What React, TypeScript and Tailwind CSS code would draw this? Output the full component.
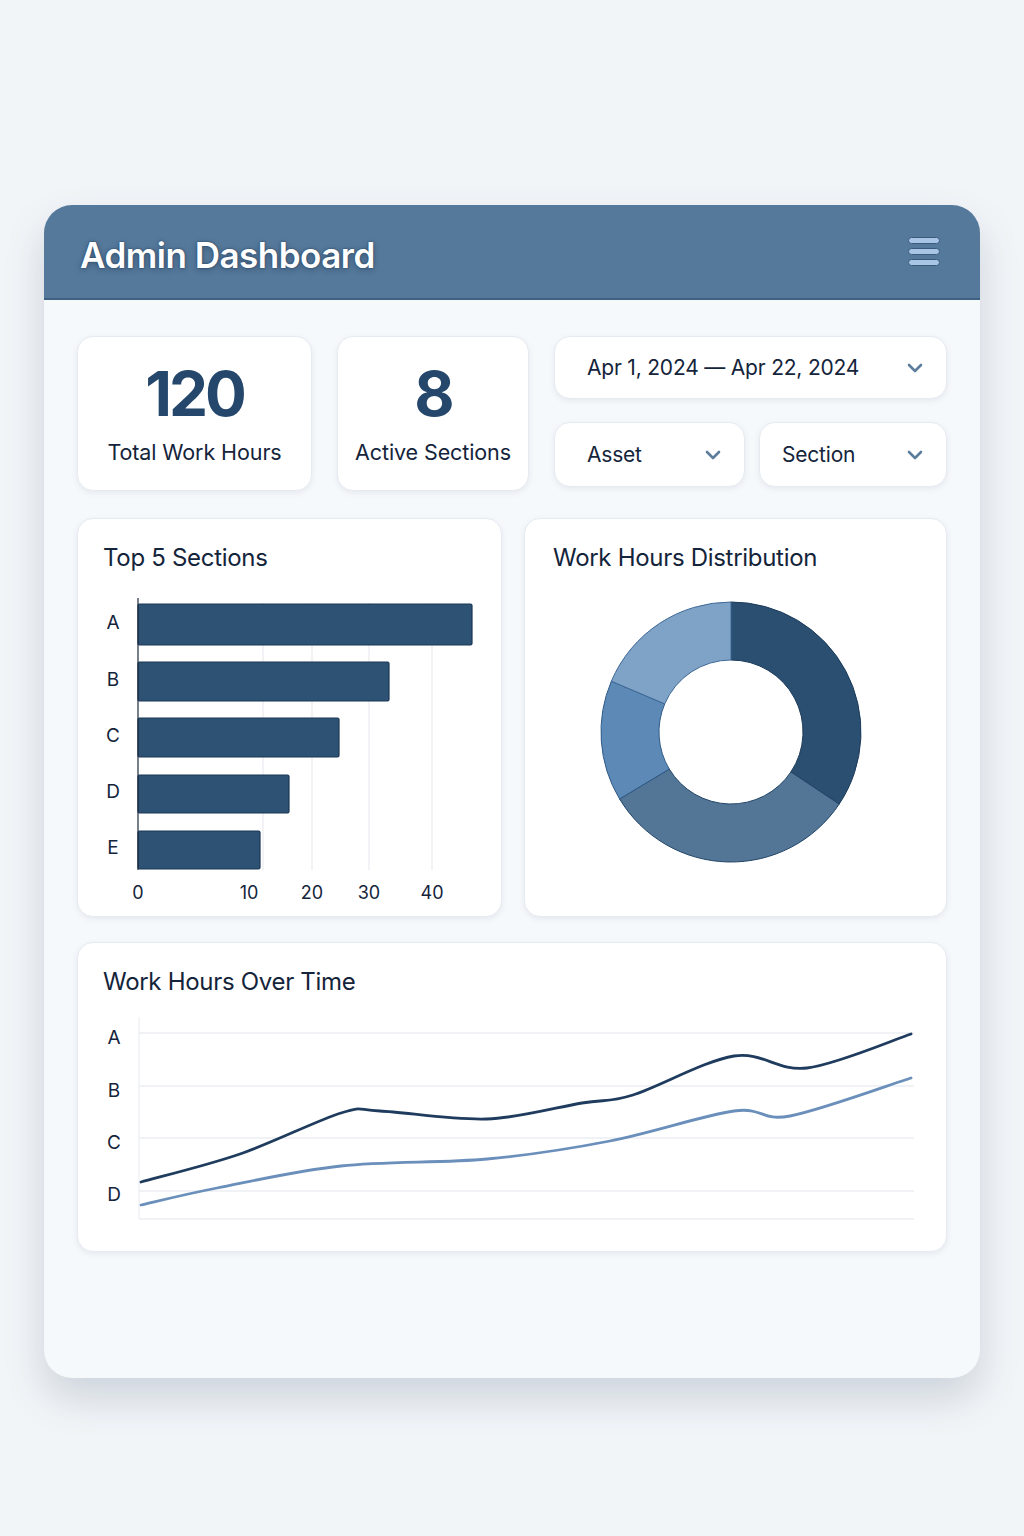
import React from 'react';

const font = { fontFamily: 'Inter, "Noto Sans", sans-serif' };

type Pt = [number, number];

// catmull-rom -> cubic bezier so the lines come out smooth
const smoothPath = (pts: Pt[]) => {
  let d = `M${pts[0][0]},${pts[0][1]}`;
  for (let i = 0; i < pts.length - 1; i++) {
    const p0 = pts[i - 1] || pts[i];
    const p1 = pts[i];
    const p2 = pts[i + 1];
    const p3 = pts[i + 2] || p2;
    const c1x = p1[0] + (p2[0] - p0[0]) / 6;
    const c1y = p1[1] + (p2[1] - p0[1]) / 6;
    const c2x = p2[0] - (p3[0] - p1[0]) / 6;
    const c2y = p2[1] - (p3[1] - p1[1]) / 6;
    d += ` C${c1x},${c1y} ${c2x},${c2y} ${p2[0]},${p2[1]}`;
  }
  return d;
};

const polar = (cx: number, cy: number, r: number, deg: number): Pt => {
  const a = (deg * Math.PI) / 180;
  return [cx + r * Math.sin(a), cy - r * Math.cos(a)];
};

const arcSlice = (cx: number, cy: number, r1: number, r2: number, a0: number, a1: number) => {
  const large = a1 - a0 > 180 ? 1 : 0;
  const [ox0, oy0] = polar(cx, cy, r2, a0);
  const [ox1, oy1] = polar(cx, cy, r2, a1);
  const [ix1, iy1] = polar(cx, cy, r1, a1);
  const [ix0, iy0] = polar(cx, cy, r1, a0);
  return `M${ox0},${oy0} A${r2},${r2} 0 ${large} 1 ${ox1},${oy1} L${ix1},${iy1} A${r1},${r1} 0 ${large} 0 ${ix0},${iy0} Z`;
};

const Chevron = () => (
  <svg width="18" height="12" viewBox="0 0 18 12" fill="none">
    <path d="M3 3l6 6 6-6" stroke="#5d7d9d" strokeWidth="2.6" strokeLinecap="round" strokeLinejoin="round" />
  </svg>
);

const StatCard = ({ value, label, width }: { value: string; label: string; width: string }) => (
  <div className={`${width} h-[155px] bg-white rounded-[16px] border border-[#e6ebf1] shadow-[0_2px_6px_rgba(30,50,80,0.08)] flex flex-col items-center`}>
    <div className="mt-[25px] text-[62px] leading-[64px] font-bold tracking-[-3px] text-[#24476b]">{value}</div>
    <div className="mt-[13px] text-[21.5px] leading-[26px] tracking-[-0.1px] text-[#14243a]">{label}</div>
  </div>
);

const Dropdown = ({ label, cls }: { label: string; cls: string }) => (
  <div className={`${cls} bg-white rounded-[16px] border border-[#e6ebf1] shadow-[0_2px_6px_rgba(30,50,80,0.08)] flex items-center justify-between pr-[22px]`}>
    <span className="text-[21px] tracking-[-0.2px] text-[#14243a]">{label}</span>
    <Chevron />
  </div>
);

const bars = [
  { k: 'A', y: 11, h: 41, w: 334 },
  { k: 'B', y: 69, h: 39, w: 251 },
  { k: 'C', y: 125, h: 39, w: 201 },
  { k: 'D', y: 182, h: 38, w: 151 },
  { k: 'E', y: 238, h: 38, w: 122 },
];

const ticks = [
  { t: '0', x: 60 },
  { t: '10', x: 171 },
  { t: '20', x: 234 },
  { t: '30', x: 291 },
  { t: '40', x: 354 },
];

const dark: Pt[] = [[63, 165], [162, 137], [263, 96], [302, 94], [409, 102], [504, 86], [555, 78], [656, 39], [729, 51], [833, 17]];
const light: Pt[] = [[63, 188], [139, 171], [263, 149], [409, 142], [532, 124], [656, 94], [712, 99], [833, 61]];

export default function App() {
  return (
    <div style={font} className="min-h-[1536px] bg-[#f2f5f8] pt-[205px] pl-[44px]">
      <div className="w-[936px] h-[1173px] rounded-[28px] overflow-hidden bg-[#f6f9fc] shadow-[0_20px_40px_rgba(40,60,90,0.18)]">
        <div className="h-[95px] bg-[#55799b] border-b-2 border-[#3f6282] flex items-center justify-between pl-[36px] pr-[40px]">
          <h1 className="mt-[8px] text-[35px] font-semibold tracking-[-0.5px] text-white [text-shadow:0_0_2px_#1f3a57,0_2px_6px_rgba(20,40,70,0.4)]">
            Admin Dashboard
          </h1>
          <div className="flex flex-col gap-[4px] mt-[0px]">
            <span className="block w-[32px] h-[7px] rounded-full bg-[#a9c5e6] border border-[#3a5b7c]" />
            <span className="block w-[32px] h-[7px] rounded-full bg-[#a9c5e6] border border-[#3a5b7c]" />
            <span className="block w-[32px] h-[7px] rounded-full bg-[#a9c5e6] border border-[#3a5b7c]" />
          </div>
        </div>

        <div className="px-[33px] pt-[36px]">
          <div className="flex gap-[25px]">
            <StatCard value="120" label="Total Work Hours" width="w-[235px]" />
            <StatCard value="8" label="Active Sections" width="w-[192px]" />
            <div className="w-[393px] flex flex-col gap-[23px]">
              <Dropdown label="Apr 1, 2024 — Apr 22, 2024" cls="w-full h-[63px] pl-[32px]" />
              <div className="flex gap-[14px]">
                <Dropdown label="Asset" cls="w-[191px] h-[65px] pl-[32px]" />
                <Dropdown label="Section" cls="w-[188px] h-[65px] pl-[22px]" />
              </div>
            </div>
          </div>

          <div className="flex gap-[22px] mt-[27px]">
            <div className="w-[425px] h-[399px] bg-white rounded-[16px] border border-[#e6ebf1] shadow-[0_2px_6px_rgba(30,50,80,0.08)]">
              <h2 className="pt-[24px] pl-[25px] h-[74px] text-[24px] leading-[30px] text-[#14243a] tracking-[-0.3px]">Top 5 Sections</h2>
              <svg width="425" height="323" viewBox="0 0 425 323">
                {[185, 234, 291, 354].map((x) => (
                  <line key={x} x1={x} y1={10} x2={x} y2={277} stroke="#e3e7ec" strokeWidth="1" />
                ))}
                {bars.map((b) => (
                  <g key={b.k}>
                    <rect x={60} y={b.y} width={b.w} height={b.h} rx="1.5" fill="#2e5274" stroke="#1b3654" strokeWidth="1.2" />
                    <text x={35} y={b.y + b.h / 2 + 4} textAnchor="middle" fontSize="19" fill="#14243a">{b.k}</text>
                  </g>
                ))}
                <line x1={60} y1={5} x2={60} y2={277} stroke="#1b2a3d" strokeWidth="1.2" />
                {ticks.map((t) => (
                  <text key={t.t} x={t.x} y={306} textAnchor="middle" fontSize="18" fill="#14243a">{t.t}</text>
                ))}
              </svg>
            </div>

            <div className="w-[423px] h-[399px] bg-white rounded-[16px] border border-[#e6ebf1] shadow-[0_2px_6px_rgba(30,50,80,0.08)]">
              <h2 className="pt-[24px] pl-[28px] h-[74px] text-[24px] leading-[30px] text-[#14243a] tracking-[-0.3px]">Work Hours Distribution</h2>
              <svg width="423" height="323" viewBox="0 0 423 323">
                <path d={arcSlice(206, 139, 72, 130, 0, 123.7)} fill="#2a4f70" stroke="#1b3a5a" strokeWidth="1" />
                <path d={arcSlice(206, 139, 72, 130, 123.7, 239)} fill="#537697" stroke="#234668" strokeWidth="1" />
                <path d={arcSlice(206, 139, 72, 130, 239, 293)} fill="#5d89b6" stroke="#2f5a87" strokeWidth="1" />
                <path d={arcSlice(206, 139, 72, 130, 293, 360)} fill="#7fa2c7" stroke="#3f6a96" strokeWidth="1" />
              </svg>
            </div>
          </div>

          <div className="mt-[25px] h-[310px] bg-white rounded-[16px] border border-[#e6ebf1] shadow-[0_2px_6px_rgba(30,50,80,0.08)]">
            <h2 className="pt-[24px] pl-[25px] h-[74px] text-[24px] leading-[30px] text-[#14243a] tracking-[-0.3px]">Work Hours Over Time</h2>
            <svg width="868" height="234" viewBox="0 0 868 234">
              {[16, 69, 121, 174, 202].map((y) => (
                <line key={y} x1={61} y1={y} x2={836} y2={y} stroke="#e1e6ec" strokeWidth="1.2" />
              ))}
              <line x1={61} y1={-8} x2={61} y2={202} stroke="#e6eaef" strokeWidth="1" />
              {[
                ['A', 21],
                ['B', 74],
                ['C', 126],
                ['D', 178],
              ].map(([k, y]) => (
                <text key={k as string} x={36} y={(y as number) + 6} textAnchor="middle" fontSize="19" fill="#14243a">{k}</text>
              ))}
              <path d={smoothPath(light)} fill="none" stroke="#6a8fbb" strokeWidth="2.8" strokeLinecap="round" />
              <path d={smoothPath(dark)} fill="none" stroke="#1f3c5e" strokeWidth="2.8" strokeLinecap="round" />
            </svg>
          </div>
        </div>
      </div>
    </div>
  );
}
